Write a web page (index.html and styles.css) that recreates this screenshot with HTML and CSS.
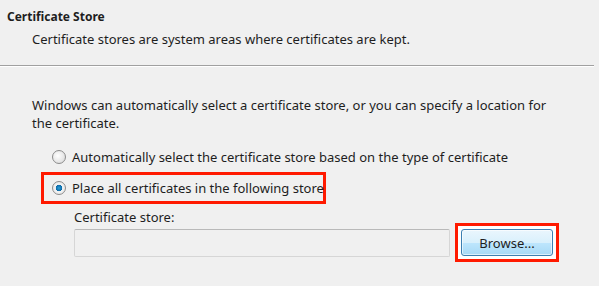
FILE: index.html
```html
<!DOCTYPE html>
<html lang="en">
<head>
    <meta charset="UTF-8">
    <title>Certificate Import Wizard</title>
    <link rel="stylesheet" href="styles.css">
</head>
<body>

    <div class="header">
        <div class="title">Certificate Store</div>
        <div class="subtitle">Certificate stores are system areas where certificates are kept.</div>
    </div>

    <div class="sep"></div>

    <div class="content">
        <p class="intro">Windows can automatically select a certificate store, or you can specify a location for the certificate.</p>

        <div class="option">
            <span class="radio"></span>
            <span>Automatically select the certificate store based on the type of certificate</span>
        </div>

        <div class="option highlight">
            <span class="radio checked"></span>
            <span>Place all certificates in the following store</span>
        </div>

        <div class="store">
            <label class="store-label">Certificate store:</label>
            <div class="store-row">
                <div class="store-input"></div>
                <div class="browse-wrap">
                    <button class="browse">Browse...</button>
                </div>
            </div>
        </div>
    </div>

</body>
</html>
```

FILE: styles.css
```css
body { margin: 0; background: #f0f0f0; color: #1e1e1e; font-family: "Noto Sans", "Open Sans", sans-serif; font-size: 13px; width: 599px; height: 286px; overflow: hidden; }
.header { padding: 8px 0 0 7px; height: 57px; box-sizing: border-box; }
.title { font-weight: bold; font-size: 12px; line-height: 18px; }
.subtitle { margin: 4px 0 0 25px; line-height: 18px; }
.sep { margin-top: 8px; margin-right: 5px; border-top: 1px solid #a0a0a0; border-bottom: 1px solid #fff; }
.content { padding: 0 0 0 32px; }
.intro { margin: 29px 0 0 0; width: 530px; line-height: 18px; }
.option { display: flex; align-items: center; gap: 6px; margin: 16px 0 0 20px; line-height: 18px; white-space: nowrap; }
.option.highlight { margin: 6px 0 0 9px; padding: 4px 0 4px 8px; width: 271px; border: 3px solid #ff1a00; }
.radio { width: 12px; height: 12px; border-radius: 50%; border: 1px solid #8c8c8c; background: radial-gradient(circle at 40% 40%, #ffffff 0%, #e6e6e6 60%, #cfcfcf 100%); flex: none; }
.radio.checked { background: radial-gradient(circle, #2a9ed8 0%, #0b6aa8 35%, #f4f4f4 42%, #dcdcdc 100%); }
.store { margin: 4px 0 0 42px; }
.store-label { display: block; line-height: 18px; }
.store-row { display: flex; align-items: center; gap: 5px; margin-top: -3px; }
.store-input { width: 374px; height: 26px; border: 1px solid #d6d6d6; border-top-color: #b9b9b9; border-radius: 2px; background: #f0f0f0; }
.browse-wrap { border: 3px solid #ff1a00; padding: 3px; background: #fff; }
.browse { display: block; width: 92px; height: 27px; border: 1px solid #3c7fb1; border-radius: 3px; background: linear-gradient(#eaf6fd 0%, #d9f0fc 50%, #bee6fd 51%, #a7d9f5 100%); box-shadow: inset 0 0 0 1px rgba(255,255,255,0.6); font-family: inherit; font-size: 13px; color: #1e1e1e; padding: 0; }
```
